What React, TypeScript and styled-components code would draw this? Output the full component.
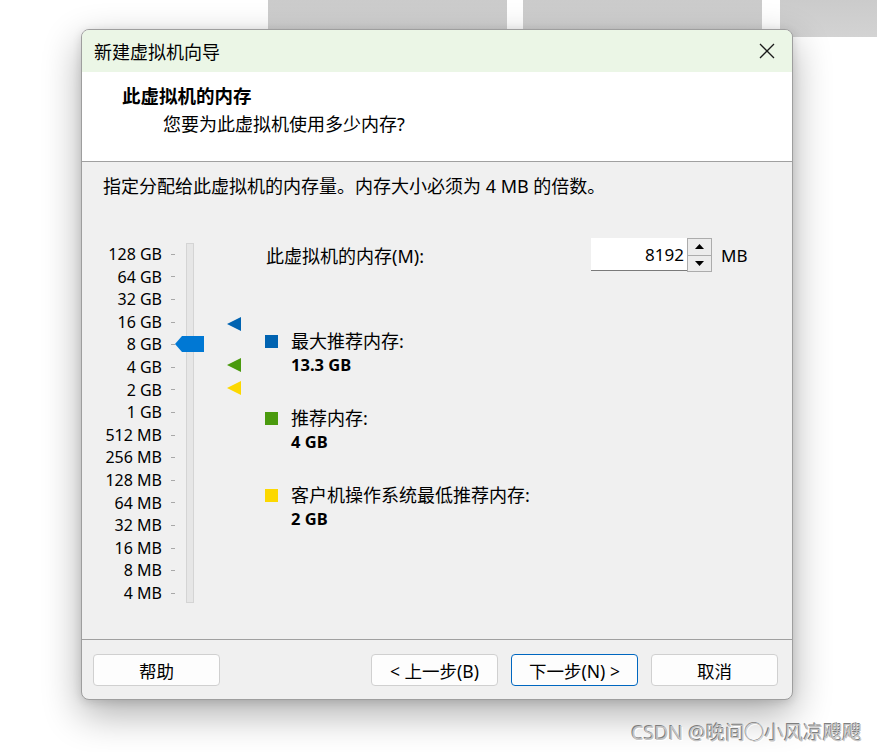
import React from 'react'
import styled, { createGlobalStyle } from 'styled-components'

const GlobalStyle = createGlobalStyle`
  html, body {
    margin: 0;
    padding: 0;
    background: #ffffff;
    width: 877px;
    height: 752px;
    overflow: hidden;
  }
  body {
    font-family: "Noto Sans", "Noto Sans CJK SC", sans-serif;
    color: #000;
  }
`

const Page = styled.div`
  position: relative;
  width: 877px;
  height: 752px;
  background: #fff;
`

const BackStrip = styled.div`
  display: flex;
  gap: 16px;
  padding-left: 268px;
  height: 37px;
`

const BackTile = styled.div<{ $w: number; $gap?: number }>`
  width: ${(p) => p.$w}px;
  margin-left: ${(p) => p.$gap || 0}px;
  background: linear-gradient(#cbcbcb, #d3d3d3);
`

const Dialog = styled.div`
  position: relative;
  margin: -8px 0 0 81px;
  width: 710px;
  height: 669px;
  border: 1px solid #9e9e9e;
  border-radius: 8px;
  background: #f0f0f0;
  box-shadow: 0 14px 38px rgba(0, 0, 0, 0.32), 0 2px 10px rgba(0, 0, 0, 0.12);
  display: flex;
  flex-direction: column;
  overflow: hidden;
`

const TitleBar = styled.div`
  height: 42px;
  flex-shrink: 0;
  background: #ebf6e6;
  display: flex;
  align-items: center;
  justify-content: space-between;
  padding: 0 17px 0 12px;
  font-size: 18px;
`

const Header = styled.div`
  height: 90px;
  flex-shrink: 0;
  background: #fff;
  border-bottom: 1px solid #a0a0a0;
  display: flex;
  flex-direction: column;
  padding: 12px 0 0 40px;
  box-sizing: border-box;
`

const HeaderTitle = styled.div`
  font-weight: bold;
  font-size: 18.5px;
  line-height: 24px;
`

const HeaderSub = styled.div`
  font-size: 18px;
  line-height: 24px;
  margin: 4px 0 0 41px;
`

const Body = styled.div`
  flex: 1;
  display: flex;
  flex-direction: column;
  padding: 12px 0 0 21px;
  border-bottom: 1px solid #a0a0a0;
`

const Hint = styled.div`
  font-size: 18px;
  line-height: 24px;
`

const Main = styled.div`
  display: flex;
  margin-top: 45px;
  margin-left: -21px;
`

const Scale = styled.div`
  display: flex;
`

const Labels = styled.div`
  width: 80px;
  display: flex;
  flex-direction: column;
`

const Label = styled.div`
  height: 22.6px;
  line-height: 22.6px;
  text-align: right;
  font-size: 16px;
  display: flex;
  justify-content: flex-end;
  align-items: center;
  white-space: nowrap;
`

const Ticks = styled.div`
  width: 4px;
  margin-left: 9px;
  display: flex;
  flex-direction: column;
`

const Tick = styled.div`
  height: 22.6px;
  display: flex;
  align-items: center;
  &::after {
    content: '';
    width: 4px;
    height: 1px;
    background: #a8a8a8;
  }
`

const TrackArea = styled.div`
  position: relative;
  width: 8px;
  margin-left: 11px;
  height: 360px;
  background: #e6e6e6;
  border: 1px solid #d4d4d4;
  box-sizing: border-box;
`

const Thumb = styled.svg`
  position: absolute;
  left: -12px;
  top: 92px;
`

const MarkerColumn = styled.div`
  position: relative;
  width: 16px;
  margin-left: 33px;
`

const Marker = styled.svg<{ $top: number }>`
  position: absolute;
  left: 0;
  top: ${(p) => p.$top}px;
`

const Panel = styled.div`
  display: flex;
  flex-direction: column;
  margin-left: 22px;
  margin-top: -5px;
`

const MemRow = styled.div`
  display: flex;
  align-items: center;
  height: 34px;
`

const MemLabel = styled.div`
  font-size: 18px;
  width: 325px;
  padding-left: 1px;
`

const SpinBox = styled.div`
  display: flex;
  height: 34px;
`

const SpinInput = styled.div`
  width: 96px;
  height: 33px;
  background: #fff;
  border-bottom: 1px solid #7a7a7a;
  box-sizing: border-box;
  display: flex;
  align-items: center;
  justify-content: flex-end;
  padding-right: 3px;
  font-size: 17px;
`

const SpinButtons = styled.div`
  width: 25px;
  height: 34px;
  border: 1px solid #acacac;
  box-sizing: border-box;
  display: flex;
  flex-direction: column;
`

const SpinButton = styled.div<{ $down?: boolean }>`
  flex: 1;
  background: #ececec;
  display: flex;
  align-items: center;
  justify-content: center;
  border-top: ${(p) => (p.$down ? '1px solid #acacac' : 'none')};
`

const Unit = styled.div`
  margin-left: 9px;
  font-size: 17px;
`

const Legend = styled.div`
  display: flex;
  flex-direction: column;
  gap: 29px;
  margin-top: 57px;
`

const LegendItem = styled.div`
  display: flex;
  gap: 13px;
`

const Swatch = styled.div<{ $color: string }>`
  width: 13px;
  height: 13px;
  margin-top: 6px;
  background: ${(p) => p.$color};
`

const LegendText = styled.div`
  display: flex;
  flex-direction: column;
`

const LegendLabel = styled.div`
  font-size: 18px;
  line-height: 24px;
`

const LegendValue = styled.div`
  font-size: 16.5px;
  font-weight: bold;
  line-height: 24px;
`

const Footer = styled.div`
  height: 59px;
  flex-shrink: 0;
  display: flex;
  align-items: flex-start;
  padding: 14px 14px 0 11px;
  box-sizing: border-box;
  gap: 13px;
`

const Button = styled.div<{ $primary?: boolean }>`
  width: 127px;
  height: 32px;
  box-sizing: border-box;
  border: 1px solid ${(p) => (p.$primary ? '#0067c0' : '#d0d0d0')};
  border-radius: 4px;
  background: #fdfdfd;
  display: flex;
  align-items: center;
  justify-content: center;
  font-size: 17.5px;
  white-space: nowrap;
`

const Spacer = styled.div`
  flex: 1;
`

const Watermark = styled.div`
  position: absolute;
  right: 15px;
  top: 717px;
  font-size: 19.5px;
  color: #c4c4c4;
  text-shadow: -1px -1px 0 #7e7e7e, 1px 1px 0 #ffffff;
  white-space: nowrap;
`

const labels = [
  '128 GB', '64 GB', '32 GB', '16 GB', '8 GB', '4 GB', '2 GB', '1 GB',
  '512 MB', '256 MB', '128 MB', '64 MB', '32 MB', '16 MB', '8 MB', '4 MB',
]

const CloseIcon = () => (
  <svg width="16" height="16" viewBox="0 0 16 16">
    <path d="M1 1 L15 15 M15 1 L1 15" stroke="#1a1a1a" strokeWidth="1.3" fill="none" />
  </svg>
)

const Triangle = ({ color, top }: { color: string; top: number }) => (
  <Marker $top={top} width="15" height="14" viewBox="0 0 15 14">
    <polygon points="0,7 14,0 14,14" fill={color} />
  </Marker>
)

export default function App() {
  return (
    <Page>
      <GlobalStyle />
      <BackStrip>
        <BackTile $w={239} />
        <BackTile $w={239} />
        <BackTile $w={97} $gap={2} />
      </BackStrip>
      <Dialog>
        <TitleBar>
          <span>新建虚拟机向导</span>
          <CloseIcon />
        </TitleBar>
        <Header>
          <HeaderTitle>此虚拟机的内存</HeaderTitle>
          <HeaderSub>您要为此虚拟机使用多少内存?</HeaderSub>
        </Header>
        <Body>
          <Hint>指定分配给此虚拟机的内存量。内存大小必须为 4 MB 的倍数。</Hint>
          <Main>
            <Scale>
              <Labels>
                {labels.map((l) => (
                  <Label key={l}>{l}</Label>
                ))}
              </Labels>
              <Ticks>
                {labels.map((l) => (
                  <Tick key={l} />
                ))}
              </Ticks>
              <TrackArea>
                <Thumb width="29" height="16" viewBox="0 0 29 16">
                  <polygon points="0,8 7,0 29,0 29,16 7,16" fill="#0078d4" />
                </Thumb>
              </TrackArea>
            </Scale>
            <MarkerColumn>
              <Triangle color="#0063b1" top={74} />
              <Triangle color="#4a9a0e" top={115} />
              <Triangle color="#fcd800" top={138} />
            </MarkerColumn>
            <Panel>
              <MemRow>
                <MemLabel>此虚拟机的内存(M):</MemLabel>
                <SpinBox>
                  <SpinInput>8192</SpinInput>
                  <SpinButtons>
                    <SpinButton>
                      <svg width="9" height="5" viewBox="0 0 9 5">
                        <polygon points="0,5 4.5,0 9,5" fill="#000" />
                      </svg>
                    </SpinButton>
                    <SpinButton $down>
                      <svg width="9" height="5" viewBox="0 0 9 5">
                        <polygon points="0,0 9,0 4.5,5" fill="#000" />
                      </svg>
                    </SpinButton>
                  </SpinButtons>
                </SpinBox>
                <Unit>MB</Unit>
              </MemRow>
              <Legend>
                <LegendItem>
                  <Swatch $color="#0063b1" />
                  <LegendText>
                    <LegendLabel>最大推荐内存:</LegendLabel>
                    <LegendValue>13.3 GB</LegendValue>
                  </LegendText>
                </LegendItem>
                <LegendItem>
                  <Swatch $color="#4a9a0e" />
                  <LegendText>
                    <LegendLabel>推荐内存:</LegendLabel>
                    <LegendValue>4 GB</LegendValue>
                  </LegendText>
                </LegendItem>
                <LegendItem>
                  <Swatch $color="#fcd800" />
                  <LegendText>
                    <LegendLabel>客户机操作系统最低推荐内存:</LegendLabel>
                    <LegendValue>2 GB</LegendValue>
                  </LegendText>
                </LegendItem>
              </Legend>
            </Panel>
          </Main>
        </Body>
        <Footer>
          <Button>帮助</Button>
          <Spacer />
          <Button>&lt; 上一步(B)</Button>
          <Button $primary>下一步(N) &gt;</Button>
          <Button>取消</Button>
        </Footer>
      </Dialog>
      <Watermark>CSDN @晚间◯小风凉飕飕</Watermark>
    </Page>
  )
}
